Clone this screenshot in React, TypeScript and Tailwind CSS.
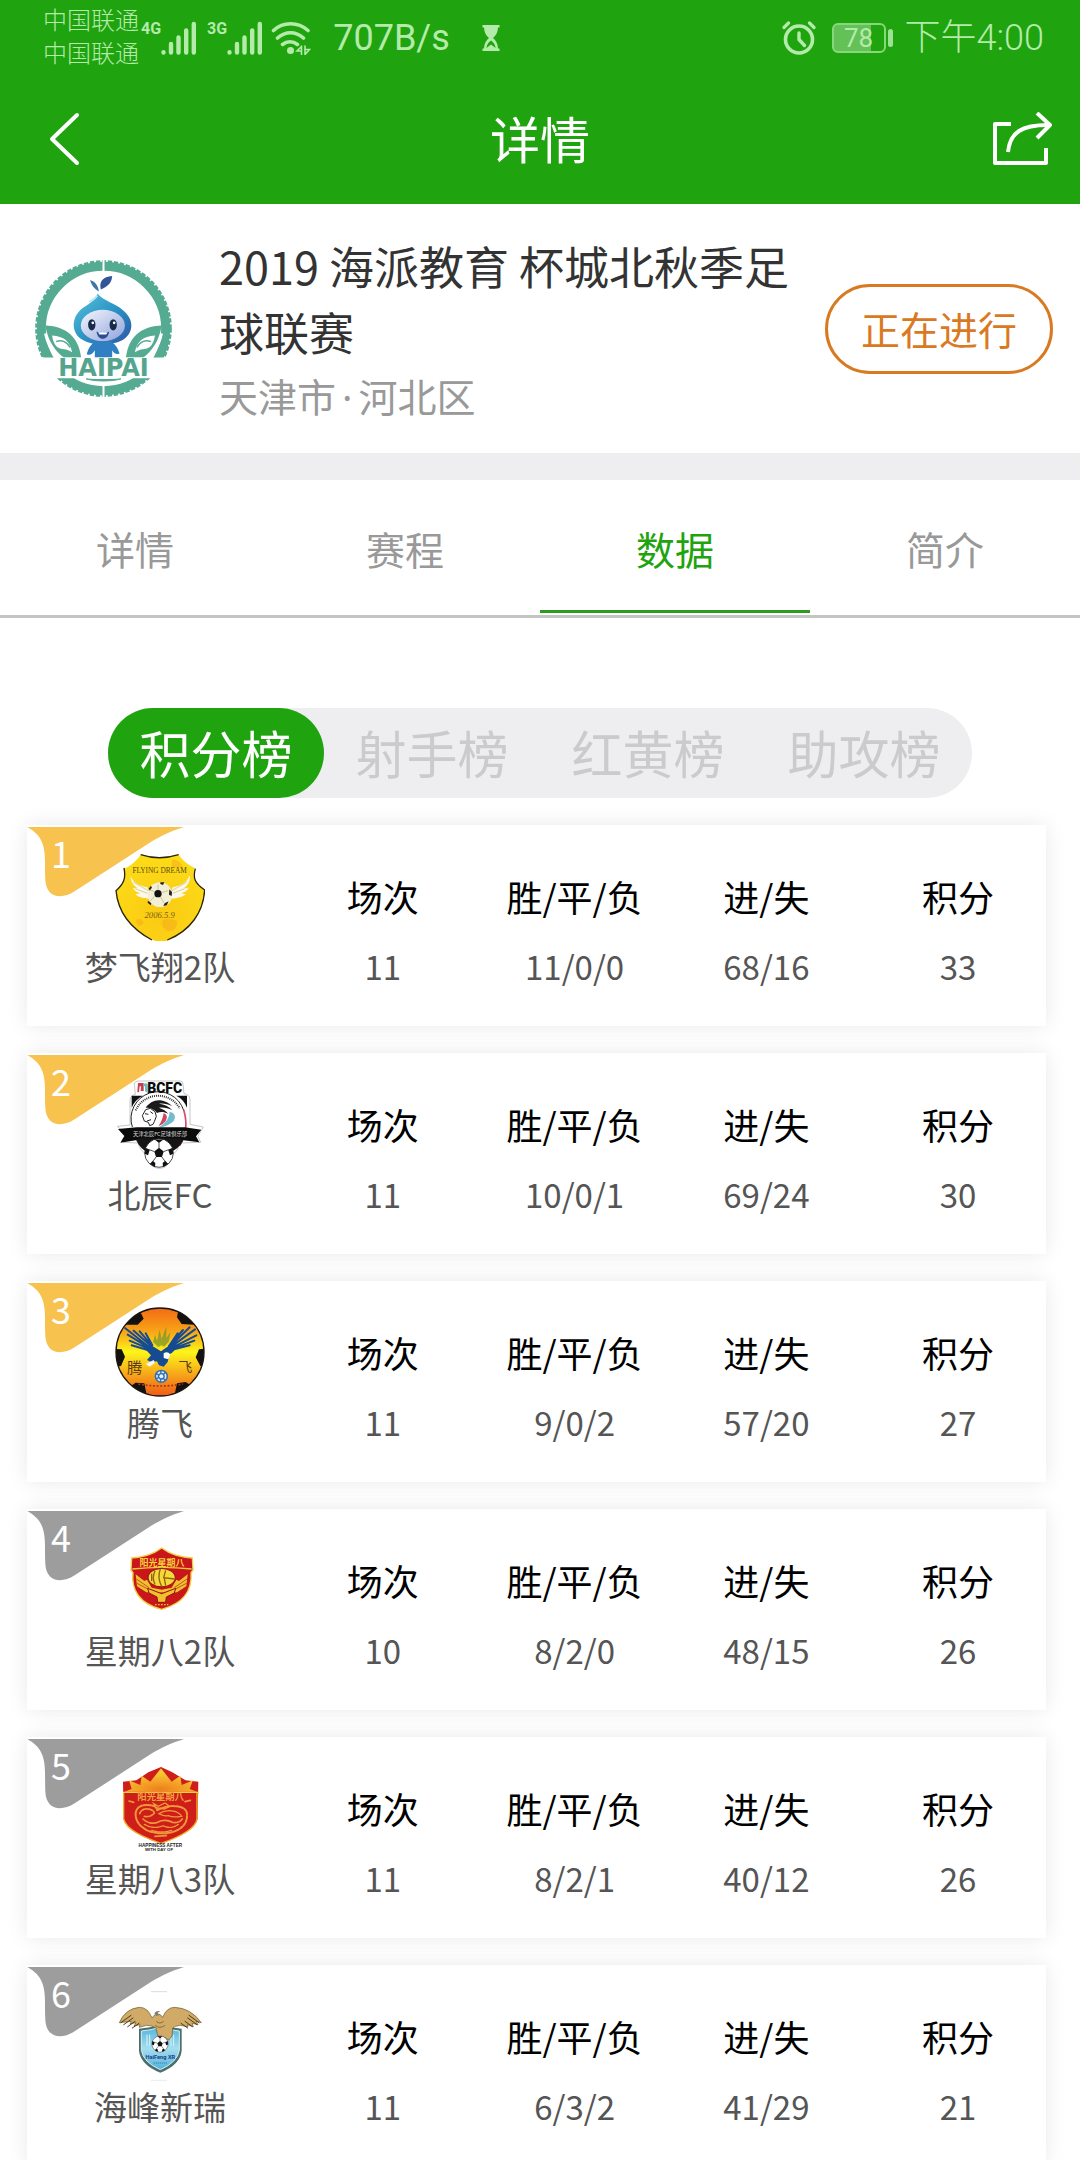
import type { ReactNode } from "react";

type Team = {
  rank: number;
  name: string;
  played: string;
  record: string;
  goals: string;
  points: string;
  crest: ReactNode;
};

/* ---------- status bar icons ---------- */

function SignalBars() {
  return (
    <svg viewBox="0 0 36 34" className="h-[34px] w-9" fill="none" stroke="currentColor" strokeWidth="4.4" strokeLinecap="round" aria-hidden="true">
      <path d="M2.5 31.2v.3M10 23v8.5M17.5 16.500v15M25.200 9.500v22M32.800 3v28.500" />
    </svg>
  );
}

function WifiIcon() {
  return (
    <svg viewBox="0 0 40 34" className="h-[34px] w-10" fill="none" stroke="currentColor" strokeWidth="3.600" strokeLinecap="round" aria-hidden="true">
      <path d="M2.500 9.500C12 .500 27 .500 37 9.500M6.500 17c8-7 18-7 26 0M11.500 23.500c4.500-3.500 10.500-3.500 15 0" />
      <circle cx="19.500" cy="29.500" r="3.500" fill="currentColor" stroke="none" />
      <path d="M30.500 25v8.500M30 26l-4 4h4M34 25v8.500M34.500 33l4-4.500h-4" strokeWidth="1.600" />
    </svg>
  );
}

function Hourglass() {
  return (
    <svg viewBox="0 0 18 26" className="h-[26px] w-[18px]" aria-hidden="true">
      <path d="M.500 0h17v2.500h-1.500c-.300 5-2 8-5 10.500 3 2.500 4.700 5.500 5 10.500h1.500V26H.500v-2.500H2C2.300 18.500 4 15.500 7 13 4 10.500 2.300 7.500 2 2.500H.500z" fill="currentColor" />
      <path d="M9 15.500c-2 1.500-4 3.500-4.600 7.500l4.600-3.500 4.600 3.500C13 19 11 17 9 15.500z" fill="#1fa30f" />
    </svg>
  );
}

function AlarmIcon() {
  return (
    <svg viewBox="0 0 34 34" className="h-[34px] w-[34px]" fill="none" stroke="currentColor" strokeLinecap="round" aria-hidden="true">
      <circle cx="17" cy="18.500" r="13.500" strokeWidth="3.600" />
      <path d="M17 12v6.500l5.500 6" strokeWidth="3.400" />
      <path d="M2 6.500L6.500 2M32 6.500L27.500 2" strokeWidth="3.200" />
    </svg>
  );
}

function BackIcon() {
  return (
    <svg viewBox="0 0 32 54" className="h-[54px] w-8" fill="none" stroke="currentColor" strokeWidth="4" strokeLinecap="round" strokeLinejoin="round" aria-hidden="true">
      <path d="M29 3L4 27l25 24" />
    </svg>
  );
}

function ShareIcon() {
  return (
    <svg viewBox="0 0 60 54" className="h-[54px] w-[60px]" fill="none" stroke="currentColor" strokeWidth="4" strokeLinejoin="round" aria-hidden="true">
      <path d="M19 12H3v39h51V36" />
      <path d="M16 40C18 20 30 13 56 13" />
      <path d="M45 1l13 12-13 13" />
    </svg>
  );
}

/* ---------- crests ---------- */

function HaipaiLogo() {
  return (
    <svg viewBox="97 152 410 410" className="h-[137px] w-[137px]" role="img" aria-label="HAIPAI">
      <defs>
        <linearGradient id="hp-hood" x1="0" y1="0" x2="1" y2="1">
          <stop offset="0" stopColor="#5cc3dc" />
          <stop offset=".5" stopColor="#2b95c4" />
          <stop offset="1" stopColor="#2c55a5" />
        </linearGradient>
        <linearGradient id="hp-face" x1="0" y1="0" x2="1" y2="1">
          <stop offset="0" stopColor="#f5f6fd" />
          <stop offset="1" stopColor="#8fa3dc" />
        </linearGradient>
      </defs>
      <circle cx="302" cy="357" r="186" fill="none" stroke="#55ab92" strokeWidth="27" />
      <circle cx="302" cy="357" r="200" fill="none" stroke="#55ab92" strokeWidth="9" strokeDasharray="13 5" />
      <path d="M302 150v40M302 520v45" stroke="#fff" strokeWidth="6" />
      <path d="M128 348c48 2 98 22 107 96h-52c-26-20-48-50-55-96z" fill="#55ab92" />
      <path d="M476 348c-48 2-98 22-107 96h52c26-20 48-50 55-96z" fill="#55ab92" />
      <path d="M148 378c36 2 54 18 60 50-12-8-20-10-30-10-16-2-26-14-30-40z" fill="#fff" />
      <path d="M456 378c-36 2-54 18-60 50 12-8 20-10 30-10 16-2 26-14 30-40z" fill="#fff" />
      <path d="M160 396c16-6 34 0 42 18M444 396c-16-6-34 0-42 18" stroke="#55ab92" strokeWidth="4" fill="none" />
      <path d="M128 372c6 30 18 52 34 72M476 372c-6 30-18 52-34 72" stroke="#fff" strokeWidth="8" fill="none" />
      <path d="M262 212c14 4 24 16 26 34-12-6-22-18-26-34z" fill="#3f74ad" />
      <path d="M294 240c-6-24 6-38 34-40-2 22-12 30-34 40z" fill="#34549a" />
      <path d="M284 252c12 16 40 26 66 42 50 34 42 78 8 98-38 18-92 18-124-4-32-26-26-70 8-94 24-16 38-24 42-42z" fill="url(#hp-hood)" />
      <ellipse cx="300" cy="348" rx="66" ry="47" fill="url(#hp-face)" />
      <path d="M262 276c10-6 16-10 20-16" stroke="#b9e9f2" strokeWidth="6" strokeLinecap="round" />
      <ellipse cx="267" cy="346" rx="11" ry="17" fill="#182a4a" />
      <ellipse cx="331" cy="346" rx="11" ry="17" fill="#182a4a" />
      <circle cx="270" cy="340" r="4" fill="#fff" />
      <circle cx="334" cy="340" r="4" fill="#fff" />
      <path d="M281 366c12 6 26 6 38 0-2 14-10 22-19 22s-17-8-19-22z" fill="#2d4c96" />
      <path d="M286 369h28l-4 6h-20z" fill="#fff" />
      <path d="M278 396h46c14 8 22 22 26 36-10 4-16 0-22-10v22h-52v-22c-8 12-14 16-24 12 4-16 12-30 26-38z" fill="#2f7fc2" />
      <path d="M97 444h410v62H97z" fill="#fff" />
      <text x="302" y="500" textAnchor="middle" fontFamily="'DejaVu Sans', sans-serif" fontWeight="700" fontSize="72" fill="#55a58e">HAIPAI</text>
      <path d="M250 508c30 8 74 8 104 0-26 2-74 2-104 0z" fill="#55ab92" stroke="#55ab92" strokeWidth="3" />
    </svg>
  );
}

function Football({ cx, cy, r, dark = "#111" }: { cx: number; cy: number; r: number; dark?: string }) {
  return (
    <g transform={`translate(${cx} ${cy}) scale(${r / 40})`}>
      <circle r="39" fill="#fff" stroke={dark} strokeWidth="2" />
      <path d="M0-14l13 10-5 15H-8l-5-15z" fill={dark} />
      <path d="M0-14v-13M13-4l13-5M8 11l8 11M-8 11l-8 11M-13-4l-13-5" stroke={dark} strokeWidth="2" />
      <path d="M-12-37h24L0-27zM37-14l2 16-9 4-5-15zM25 30l-14 8-1-11 7-6zM-25 30l14 8 1-11-7-6zM-37-14l-2 16 9 4 5-15z" fill={dark} />
    </g>
  );
}

function FlyingDreamCrest() {
  return (
    <svg viewBox="337 483 270 270" className="h-[90px] w-[90px]" aria-hidden="true">
      <defs>
        <radialGradient id="fd-fill" cx=".5" cy=".7" r=".7">
          <stop offset="0" stopColor="#fbc913" />
          <stop offset="1" stopColor="#fcdc17" />
        </radialGradient>
      </defs>
      <path d="M414 494c36 12 76 12 114 0 10 14 24 28 48 40-8 28-2 46 30 66-4 66-42 122-112 152-12 2-26 2-38 0-72-36-110-86-116-150 26-20 32-38 24-66 20-8 38-24 50-42z" fill="url(#fd-fill)" />
      <path d="M510 508q24 4 30 22-20 10-34-4zM480 690q20-8 44 4-2 30-26 30-24-6-18-34zM400 690q14-8 24 6-6 14-20 10z" fill="#f5a81b" opacity=".5" />
      <path d="M414 494c36 12 76 12 114 0M578 536c-8 28-2 44 28 64-4 66-42 122-112 150M364 534c6 30 0 48-24 68 6 64 44 114 108 148" fill="none" stroke="#2b2405" strokeWidth="4" />
      <text x="471" y="549" textAnchor="middle" fontFamily="'Liberation Serif', serif" fontSize="22" fill="#5b4a10">FLYING DREAM</text>
      <path d="M384 558c6 20 30 30 50 34l8 34c-18 0-34-4-44-14 6 0 10-1 14-3-10-2-18-8-22-16 6 2 10 2 14 1-12-8-20-20-20-36z" fill="#fbf8ea" />
      <path d="M560 558c-6 20-30 30-50 34l-8 34c18 0 36-4 48-14-6 0-10-1-14-3 10-2 20-8 22-16-6 2-10 2-14 1 12-8 18-20 18-36z" fill="#fbf8ea" />
      <path d="M392 576l44 26M398 596l36 14M552 576l-44 26M546 596l-36 14" stroke="#d8cf9d" strokeWidth="3" />
      <circle cx="472" cy="614" r="37" fill="#f3efd4" />
      <circle cx="466" cy="611" r="11" fill="#111" />
      <path d="M473 577h12l-4 8-8-3zM500 598l8 8-1 12-8-4zM486 640l12-6-6 12-10 2zM436 632l10 8-2 6-9-8zM438 596l6-8 4 4-6 10z" fill="#222" />
      <path d="M466 600v-16M476 608l20-6M474 621l10 18M456 618l-14 16M456 606l-14-8" stroke="#b8b08a" strokeWidth="2" />
      <text x="471" y="685" textAnchor="middle" fontFamily="'Liberation Serif', serif" fontStyle="italic" fontSize="26" fill="#7a6114">2006.5.9</text>
    </svg>
  );
}

function BcfcCrest() {
  return (
    <svg viewBox="288 118 270 270" className="h-[90px] w-[90px]" aria-hidden="true">
      <path d="M346 132q2-8 12-8h126q8 0 8 10l3 28q16 2 18 16v76l40 8-16 28 8 18-62 2c-6 18-12 28-24 36-4 26-20 40-38 40s-36-14-38-40c-14-10-22-22-26-36l-44-2 12-22-30-26 38-4v-74q2-16 16-18z" fill="#fff" stroke="#aaa" strokeWidth="2" />
      <path d="M338 168h34c-16 8-28 20-34 36zM504 168h-32c16 8 26 20 32 36z" fill="#111" />
      <path d="M340 262a78 78 0 0 1 154-50" fill="none" stroke="#222" strokeWidth="3" />
      <path d="M350 212a74 74 0 0 1 132-6" fill="none" stroke="#333" strokeWidth="6" strokeDasharray="3 3" />
      <path d="M494 210q18 60-12 108" fill="none" stroke="#d94a6c" strokeWidth="5" />
      <path d="M357 130h17v24h-9l1-14h-4l-2 18h-5z" fill="#c93d4d" />
      <path d="M374 132q12-4 12 4v24l-8-6v-14h-6z" fill="#6ab9c8" />
      <text x="437" y="159" textAnchor="middle" fontFamily="'Roboto', sans-serif" fontWeight="900" fontSize="42" fill="#0c0c0c">BCFC</text>
      <path d="M380 204c10-14 26-24 44-22 14 2 26 8 36 18-14-8-28-10-40-8 16 2 30 8 40 20-14-8-28-10-40-8 12 4 22 10 28 18-14-6-24-6-34-2-6-10-18-16-34-16z" fill="#1a1a1a" />
      <path d="M370 228l10-18 14-4 14 10 4 14-6 16-4 8-10 4-4-10-12-4z" fill="#fff" stroke="#222" strokeWidth="3" />
      <path d="M378 222l10 2M394 216l8 6M384 244l12-4" stroke="#222" strokeWidth="3" />
      <path d="M452 216q24 6 12 28-14 16-46 20 34-20 34-48z" fill="#74bccb" />
      <path d="M434 220q16 8 6 24-8 12-22 16 12-16 16-40z" fill="#cf4660" />
      <path d="M348 292h148q-6 26-34 42h-84q-22-16-30-42z" fill="#151515" />
      <Football cx={420} cy={340} r={44} />
      <path d="M297 268l56-5h144l50 7-16 20 10 18-48-6-13-6H362l-12 6-46 7 12-20z" fill="#0b0b0b" />
      <text x="423" y="288" textAnchor="middle" fontFamily="'Noto Sans CJK SC', sans-serif" fontSize="16" fill="#ddd">天津北辰FC足球俱乐部</text>
    </svg>
  );
}

function TengfeiCrest() {
  return (
    <svg viewBox="288 111 270 270" className="h-[90px] w-[90px]" aria-hidden="true">
      <defs>
        <linearGradient id="tf-sky" x1="0" y1="0" x2="0" y2="1">
          <stop offset="0" stopColor="#f36a16" />
          <stop offset=".28" stopColor="#f8a817" />
          <stop offset=".5" stopColor="#fdf51a" />
          <stop offset=".7" stopColor="#f9b71a" />
          <stop offset="1" stopColor="#f05a18" />
        </linearGradient>
        <clipPath id="tf-clip">
          <circle cx="423" cy="246" r="132" />
        </clipPath>
      </defs>
      <circle cx="423" cy="246" r="132" fill="url(#tf-sky)" />
      <g clipPath="url(#tf-clip)" fill="#141210">
        <path d="M310 130h56l8 16-18 18H318zM480 110l-6 32 14 20 36 2 20-40zM280 236l28 2 10 22-12 28-26 4zM570 234l-30 4-10 24 14 26h30zM330 352l20-14 26 2 6 30-10 20h-50zM522 350l-22-14-26 4-6 28 12 20h46z" />
      </g>
      <circle cx="423" cy="246" r="132" fill="none" stroke="#1b1410" strokeWidth="4" />
      <g stroke="#164a92" strokeWidth="6" strokeLinecap="round" fill="none">
        <path d="M394 234L318 174M394 236L326 194M394 238L332 212M394 242L338 226M396 228L344 182M398 226L362 184M400 226L380 190" />
        <path d="M454 232L528 178M454 236L532 196M456 238L526 212M456 240L512 226M452 230L512 172M450 228L492 180M450 228L476 190" />
      </g>
      <path d="M376 228q20-6 34 6l16 10q14-10 26-18l22-2q-4 20-22 28l-6 24-12 14-14-4-6-12-18 2-12-6 12-14q-14-12-20-28z" fill="#164a92" />
      <path d="M402 216l6-22 6 18 8-32 6 26 14-36 0 34 12-18-4 28-14 16-10-4-8 6z" fill="#5d8a2f" opacity=".6" />
      <path d="M434 250q12-8 20 4l-6 14-14-4z" fill="#fff" />
      <path d="M380 282l24-12 4 8-16 12z" fill="#f4f6ff" />
      <circle cx="427" cy="319" r="20" fill="#2f6fb4" />
      <circle cx="427" cy="319" r="13" fill="none" stroke="#dfe9f7" strokeWidth="5" strokeDasharray="8 4" />
      <circle cx="427" cy="319" r="6" fill="#e9f0fa" />
      <text x="347" y="309" textAnchor="middle" fontFamily="'Noto Sans CJK SC', sans-serif" fontSize="46" fill="#5a3b12">腾</text>
      <text x="499" y="307" textAnchor="middle" fontFamily="'Noto Sans CJK SC', sans-serif" fontSize="42" fill="#5a3b12">飞</text>
      <path d="M358 342q66 12 134 0" fill="none" stroke="#a33a12" strokeWidth="5" strokeDasharray="6 5" />
    </svg>
  );
}

function SundayShieldCrest() {
  return (
    <svg viewBox="288 106 270 270" className="h-[90px] w-[90px]" aria-hidden="true">
      <path d="M428 145c24 18 56 28 92 30l2 36-6 8c4 52-22 92-88 110-66-16-92-58-86-110l-6-8 2-36c34-2 66-12 90-30z" fill="#c9161b" stroke="#f3cf47" strokeWidth="4" />
      <path d="M340 208q88-10 178 0" stroke="#f2c53c" strokeWidth="4" fill="none" />
      <text x="429" y="200" textAnchor="middle" fontFamily="'Noto Sans CJK SC', sans-serif" fontWeight="700" fontSize="27" fill="#f5d23a">阳光星期八</text>
      <path d="M350 224l26 20 8-4 14 24 30 6 30-6 14-24 8 4 26-20-4 36-28 18-38 2-8-2-8 2-38-2-28-18z" fill="#f0c02e" />
      <path d="M352 238l38 26M352 250l38 20M504 238l-38 26M504 250l-38 20" stroke="#c4581d" strokeWidth="3" />
      <ellipse cx="428" cy="234" rx="41" ry="28" fill="#f6d83b" stroke="#a61a16" strokeWidth="4" />
      <path d="M408 214q-10 20 0 40M424 208q-10 26 4 52M440 212l-6 22 32 4M436 236l4 22M398 222l0 22" fill="none" stroke="#8c6410" strokeWidth="4" />
      <path d="M386 266l42 16 42-16-4 14-24 12-2 16h-24l-2-16-24-12z" fill="#f0c02e" stroke="#8e1413" strokeWidth="3" />
      <path d="M408 315h40" stroke="#f0c02e" strokeWidth="4" strokeDasharray="5 4" />
    </svg>
  );
}

function SundayCrownCrest() {
  return (
    <svg viewBox="288 100 270 270" className="h-[90px] w-[90px]" aria-hidden="true">
      <defs>
        <radialGradient id="sc-sun" cx=".5" cy=".9" r=".7">
          <stop offset="0" stopColor="#ef7f1e" />
          <stop offset="1" stopColor="#f8c931" />
        </radialGradient>
      </defs>
      <path d="M312 156l40-4 36-24 38-16 34 16 40 24 38 4-2 112c-8 34-60 56-110 74-52-18-104-40-112-74z" fill="#cf1d1a" />
      <path d="M314 188V268c8 32 58 54 112 73 52-18 102-40 108-73v-80" fill="none" stroke="#f4b12b" strokeWidth="4" />
      <path d="M316 186l22-8-8-26 34 14 4-28 26 18 32-40 32 40 26-18 4 28 34-14-10 26 22 8z" fill="url(#sc-sun)" />
      <path d="M312 188h228" stroke="#f6cf3c" strokeWidth="4" />
      <text x="425" y="211" textAnchor="middle" fontFamily="'Noto Sans CJK SC', sans-serif" fontWeight="700" fontSize="28" fill="#f2a23a">阳光星期八</text>
      <g fill="none" stroke="#ee9a3a" strokeLinecap="round">
        <path d="M404 222l14 8 20-10 14 10-16 8-26-4z" strokeWidth="4" />
        <path d="M350 250q4-24 34-24t30 16q30-16 60-12 32 4 30 28 0 36-46 50-40 8-74-6-36-20-34-52z" strokeWidth="6" strokeDasharray="8 4" />
        <path d="M362 252q6-16 24-14t20 12q-12 14-30 10M372 268q20 18 44 10 20-12 44 0 18 4 30-10" strokeWidth="5" strokeDasharray="9 3" />
        <path d="M420 252q24-14 50-6 14 6 18 14-26 4-40-2-14 2-28-6zM376 284q28 16 56 4 24 12 46-4M398 302q28 10 60 0" strokeWidth="4" strokeDasharray="7 3" />
        <path d="M330 214l14 4M498 216l16-4M408 320l34-2" strokeWidth="5" />
      </g>
      <text x="424" y="353" textAnchor="middle" fontFamily="'Liberation Sans', sans-serif" fontWeight="700" fontSize="14" fill="#222">HAPPINESS AFTER</text>
      <text x="420" y="364" textAnchor="middle" fontFamily="'Liberation Sans', sans-serif" fontWeight="700" fontSize="13" fill="#222">WITH DAY OF</text>
    </svg>
  );
}

function HaifengCrest() {
  return (
    <svg viewBox="288 123 270 270" className="h-[90px] w-[90px]" aria-hidden="true">
      <defs>
        <linearGradient id="hf-shield" x1="0" y1="0" x2="0" y2="1">
          <stop offset="0" stopColor="#4fb5dc" />
          <stop offset=".5" stopColor="#a6def0" />
          <stop offset="1" stopColor="#4fb3dd" />
        </linearGradient>
      </defs>
      <path d="M396 125h48" stroke="#ccc" strokeWidth="2" />
      <path d="M360 236q34-2 64-14 30 12 64 14v66q-4 42-64 66-60-24-64-66z" fill="#4a6f6c" />
      <path d="M367 243q30-2 57-12 28 10 57 12v58q-6 36-57 58-51-22-57-58z" fill="url(#hf-shield)" stroke="#d9f0f5" strokeWidth="3" />
      <path d="M384 254v34M392 254v34M456 254v34M464 254v34" stroke="#d9f3fa" strokeWidth="3" />
      <path d="M301 218q18-42 60-46 26 0 38 32 6-10 14-12 12-2 18 10 12-30 36-30 48 2 80 46l-16-4 6 10-18-4 4 10-18-6 2 6-24-4q-16 2-22 8l-2 24-10 12-12-8-14 10-8-20-4-18q-12-8-28-8l-22 6 2-8-18 4 6-10-18 4 4-8z" fill="#d0aa66" stroke="#6a5428" strokeWidth="2" />
      <path d="M306 218l30-22M314 224l28-20M326 230l22-16M340 234l20-14M540 218l-30-22M534 224l-28-20M520 230l-22-16M506 234l-20-14" stroke="#4d3c1b" strokeWidth="3" strokeLinecap="round" />
      <path d="M406 190q6-10 18-6l-8 4 4 8-8 2z" fill="#7b7f74" />
      <path d="M412 214q10 10 22 0M408 226q14 12 30 0" stroke="#8b6b32" strokeWidth="3" fill="none" />
      <Football cx={423} cy={282} r={25} />
      <text x="424" y="328" textAnchor="middle" fontFamily="'Roboto', sans-serif" fontWeight="700" fontSize="17" fill="#223a86">HaiFeng XR</text>
      <path d="M404 339h42" stroke="#3f7fb3" strokeWidth="3" strokeDasharray="4 2" />
      <path d="M396 391h48" stroke="#d8e4ea" strokeWidth="2" />
    </svg>
  );
}

/* ---------- data ---------- */

const teams: Team[] = [
  { rank: 1, name: "梦飞翔2队", played: "11", record: "11/0/0", goals: "68/16", points: "33", crest: <FlyingDreamCrest /> },
  { rank: 2, name: "北辰FC", played: "11", record: "10/0/1", goals: "69/24", points: "30", crest: <BcfcCrest /> },
  { rank: 3, name: "腾飞", played: "11", record: "9/0/2", goals: "57/20", points: "27", crest: <TengfeiCrest /> },
  { rank: 4, name: "星期八2队", played: "10", record: "8/2/0", goals: "48/15", points: "26", crest: <SundayShieldCrest /> },
  { rank: 5, name: "星期八3队", played: "11", record: "8/2/1", goals: "40/12", points: "26", crest: <SundayCrownCrest /> },
  { rank: 6, name: "海峰新瑞", played: "11", record: "6/3/2", goals: "41/29", points: "21", crest: <HaifengCrest /> },
];

const tabs = ["详情", "赛程", "数据", "简介"];
const boards = ["积分榜", "射手榜", "红黄榜", "助攻榜"];

/* ---------- sections ---------- */

function StatusBar() {
  return (
    <div className="flex h-[72px] items-center justify-between pt-1 pr-9 pl-[43px] font-['Roboto','Noto_Sans_CJK_SC',sans-serif] text-[#b4ebaa]">
      <div className="flex items-center">
        <div className="text-[24px] leading-[33px] font-light">
          <div>中国联通</div>
          <div>中国联通</div>
        </div>
        <div className="ml-0.5 flex items-start">
          <span className="text-[16px] leading-4 font-bold">4G</span>
          <SignalBars />
        </div>
        <div className="ml-2.5 flex items-start">
          <span className="text-[16px] leading-4 font-bold">3G</span>
          <SignalBars />
        </div>
        <div className="ml-2">
          <WifiIcon />
        </div>
        <span className="ml-[22px] text-[36px] leading-none">707B/s</span>
        <div className="ml-8">
          <Hourglass />
        </div>
      </div>
      <div className="flex items-center">
        <AlarmIcon />
        <div className="ml-4 flex items-center gap-0.5">
          <div className="flex h-[30px] w-[54px] items-center justify-center rounded-md border-2 border-[#86d87a] bg-linear-to-r from-[#63c158] from-75% to-transparent to-75% text-[26px] leading-none">
            78
          </div>
          <div className="h-[18px] w-[5px] rounded-full bg-[#9de293]" />
        </div>
        <span className="ml-3 text-[36px] leading-none font-light">下午4:00</span>
      </div>
    </div>
  );
}

function RankBadge({ rank }: { rank: number }) {
  return (
    <div className={`absolute top-0.5 left-0 h-[70px] w-[157px] ${rank <= 3 ? "text-[#f8c24e]" : "text-[#9d9d9d]"}`}>
      <svg viewBox="21 47 471 210" className="h-full w-full" aria-hidden="true">
        <path d="M22 47H492C450 60 424 74 396 90L164 240C120 268 78 256 76 205C74 160 78 128 68 98C60 74 44 60 22 47z" fill="currentColor" />
      </svg>
      <span className="absolute top-0 left-6 text-[36px] leading-[50px] text-white">{rank}</span>
    </div>
  );
}

function TeamCard({ team }: { team: Team }) {
  return (
    <li className="relative bg-white pt-[26px] pb-[34px] shadow-[0_0_20px_rgba(0,0,0,0.09)]">
      <RankBadge rank={team.rank} />
      <div className="relative -mr-2 flex">
        <div className="flex w-[266px] shrink-0 flex-col items-center text-[33px] leading-[51px] text-[#555]">
          {team.crest}
          <h2>{team.name}</h2>
        </div>
        <div className="-ml-1.5 flex-1">
          <table className="w-full table-fixed text-center">
            <thead>
              <tr className="h-[90px] text-[36px] leading-[51px] text-black">
                <th scope="col" className="p-0 font-normal">场次</th>
                <th scope="col" className="p-0 font-normal">胜/平/负</th>
                <th scope="col" className="p-0 font-normal">进/失</th>
                <th scope="col" className="p-0 font-normal">积分</th>
              </tr>
            </thead>
            <tbody>
              <tr className="text-[33px] leading-[51px] text-[#555]">
                <td className="p-0">{team.played}</td>
                <td className="p-0">{team.record}</td>
                <td className="p-0">{team.goals}</td>
                <td className="p-0">{team.points}</td>
              </tr>
            </tbody>
          </table>
        </div>
      </div>
    </li>
  );
}

export default function App() {
  return (
    <div className="flex h-screen flex-col overflow-hidden bg-white font-['Noto_Sans_CJK_SC',sans-serif] text-[#333]">
      <header className="shrink-0 bg-[#1fa30f] pb-[9px] text-white">
        <StatusBar />
        <div className="grid h-[123px] grid-cols-[1fr_auto_1fr] items-center px-7 pt-2.5">
          <button type="button" aria-label="返回" className="justify-self-start pl-5">
            <BackIcon />
          </button>
          <h1 className="pb-1 text-[50px] leading-[60px]">详情</h1>
          <button type="button" aria-label="分享" className="justify-self-end">
            <ShareIcon />
          </button>
        </div>
      </header>

      <main className="flex-1 overflow-y-auto [scrollbar-width:none]">
        <section className="flex h-[249px] items-center pr-[27px] pl-[35px]">
          <HaipaiLogo />
          <div className="ml-[47px] flex-1">
            <h2 className="text-[45px] leading-[66px]">2019 海派教育 杯城北秋季足球联赛</h2>
            <p className="text-[39px] leading-[60px] text-[#999]">
              天津市<span className="px-1.5 font-['Noto_Sans',sans-serif] leading-none">·</span>河北区
            </p>
          </div>
          <button type="button" className="ml-2 h-[90px] w-[228px] rounded-full border-3 border-[#d97a22] text-[39px] leading-none text-[#d97a22]">
            正在进行
          </button>
        </section>

        <div className="h-[27px] bg-[#eeeef0]" />

        <nav className="grid grid-cols-4 border-b-3 border-[#c4c4c4] pb-0.5">
          {tabs.map((tab) => (
            <button
              key={tab}
              type="button"
              aria-current={tab === "数据" ? "page" : undefined}
              className={`h-[133px] border-b-3 pt-1.5 text-[39px] ${tab === "数据" ? "border-[#2f9a22] text-[#1fa30f]" : "border-transparent text-[#999]"}`}
            >
              {tab}
            </button>
          ))}
        </nav>

        <div className="mx-[10%] mt-[90px] grid grid-cols-4 rounded-full bg-[#eeeef0]">
          {boards.map((board) => (
            <button
              key={board}
              type="button"
              aria-pressed={board === "积分榜"}
              className={`h-[90px] rounded-full pb-0.5 text-[51px] leading-none ${board === "积分榜" ? "bg-[#1fa30f] text-white" : "text-[#cbcbcd]"}`}
            >
              {board}
            </button>
          ))}
        </div>

        <ul className="mt-[27px] mr-[34px] ml-[27px] flex flex-col gap-[27px] pb-[27px]">
          {teams.map((team) => (
            <TeamCard key={team.rank} team={team} />
          ))}
        </ul>
      </main>
    </div>
  );
}
